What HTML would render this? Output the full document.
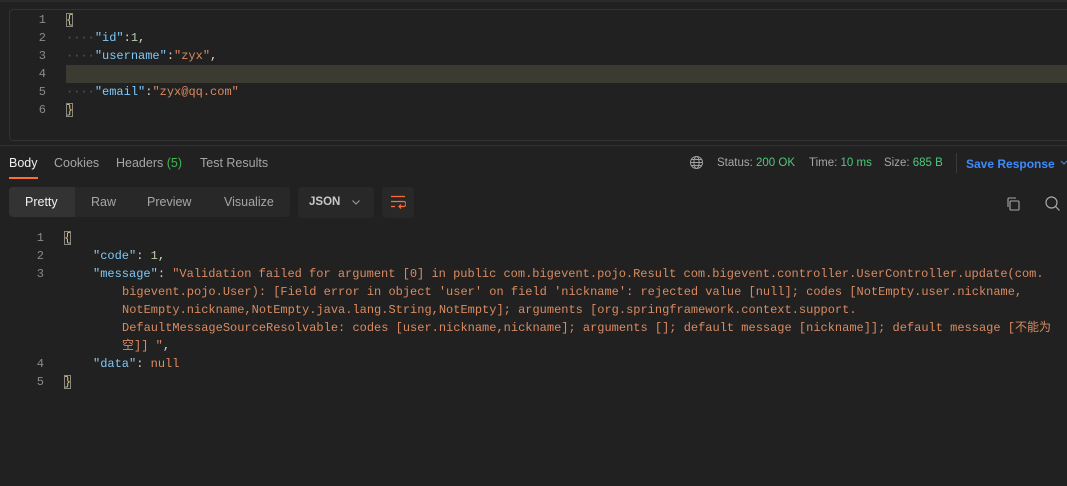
<!DOCTYPE html>
<html><head><style>
*{margin:0;padding:0;box-sizing:border-box}
body{width:1067px;height:404px;background:#212121;overflow:hidden;position:relative;font-family:"Liberation Sans","Noto Sans CJK SC",sans-serif}
.mono{font-family:"Liberation Mono","Noto Sans CJK SC",monospace;font-size:12px;white-space:pre;line-height:18px}
.mono span{line-height:18px}
.ab{position:absolute}
.ln{position:absolute;width:20px;text-align:right;color:#8a8a8a}
.k{color:#7fc8f8}.s{color:#d98b62}.n{color:#b5cea8}.p{color:#d4d4d4}.d{color:#555}
.br{display:inline-block;outline:1px solid #888;outline-offset:-1px;color:#e0c060;line-height:14px!important}
.t{position:absolute;font-size:12.5px;color:#a6a6a6;top:156px}
</style></head><body>
<div class="ab" style="left:0;top:0;width:1067px;height:2px;background:#2a2a2a"></div>
<div class="ab" style="left:9px;top:9px;width:1070px;height:132px;border:1px solid #333;border-right:none;border-radius:4px 0 0 4px"></div>
<div class="ab" style="left:0;top:145px;width:1067px;height:1px;background:#303030"></div>
<div class="ab" style="left:66px;top:65px;width:1001px;height:18px;background:#3b3b31"></div>
<div class="mono">
<span class="ln" style="left:26px;top:11px">1</span>
<span class="ln" style="left:26px;top:29px">2</span>
<span class="ln" style="left:26px;top:47px">3</span>
<span class="ln" style="left:26px;top:65px">4</span>
<span class="ln" style="left:26px;top:83px">5</span>
<span class="ln" style="left:26px;top:101px">6</span>
<span class="ab" style="left:66px;top:11px"><span class="br">{</span></span>
<span class="ab" style="left:66px;top:29px"><span class="d">····</span><span class="k">"id"</span><span class="p">:</span><span class="n">1</span><span class="p">,</span></span>
<span class="ab" style="left:66px;top:47px"><span class="d">····</span><span class="k">"username"</span><span class="p">:</span><span class="s">"zyx"</span><span class="p">,</span></span>
<span class="ab" style="left:66px;top:83px"><span class="d">····</span><span class="k">"email"</span><span class="p">:</span><span class="s">"zyx@qq.com"</span></span>
<span class="ab" style="left:66px;top:101px"><span class="br">}</span></span>
</div>

<span class="t" style="left:9px;color:#f0f0f0">Body</span>
<div class="ab" style="left:9px;top:177px;width:29px;height:2px;background:#ff6c37"></div>
<span class="t" style="left:54px">Cookies</span>
<span class="t" style="left:116px">Headers <span style="color:#3fb950">(5)</span></span>
<span class="t" style="left:200px">Test Results</span>

<svg class="ab" style="left:689px;top:155px" width="15" height="15" viewBox="0 0 15 15" fill="none" stroke="#a0a0a0" stroke-width="1"><circle cx="7.5" cy="7.5" r="6"/><ellipse cx="7.5" cy="7.5" rx="2.6" ry="6"/><path d="M1.5 7.5h12M2.5 4.5h10M2.5 10.5h10"/></svg>
<span class="t" style="left:717px;font-size:11.5px;top:157px">Status: <span style="color:#4ec97a">200 OK</span></span>
<span class="t" style="left:809px;font-size:11.5px;top:157px">Time: <span style="color:#4ec97a">10 ms</span></span>
<span class="t" style="left:884px;font-size:11.5px;top:157px">Size: <span style="color:#4ec97a">685 B</span></span>
<div class="ab" style="left:956px;top:153px;width:1px;height:20px;background:#3a3a3a"></div>
<span class="t" style="left:966px;color:#3d8bfd;font-weight:bold;font-size:12px;top:157px">Save Response</span>
<svg class="ab" style="left:1060px;top:159px" width="8" height="7" viewBox="0 0 8 7"><path d="M1 2l3 3 3-3" stroke="#3d8bfd" fill="none"/></svg>

<div class="ab" style="left:9px;top:187px;width:281px;height:30px;background:#282828;border-radius:4px"></div>
<div class="ab" style="left:9px;top:187px;width:66px;height:30px;background:#333;border-radius:4px 0 0 4px"></div>
<span class="t" style="left:25px;top:195px;color:#f0f0f0">Pretty</span>
<span class="t" style="left:91px;top:195px">Raw</span>
<span class="t" style="left:147px;top:195px">Preview</span>
<span class="t" style="left:224px;top:195px">Visualize</span>
<div class="ab" style="left:298px;top:187px;width:76px;height:31px;background:#282828;border-radius:4px"></div>
<span class="t" style="left:309px;top:196px;font-size:11.5px;font-weight:bold;color:#c8c8c8">JSON</span>
<svg class="ab" style="left:351px;top:199px" width="10" height="7" viewBox="0 0 10 7"><path d="M1.5 1.5l3.5 3.5 3.5-3.5" stroke="#a0a0a0" fill="none"/></svg>
<div class="ab" style="left:382px;top:187px;width:32px;height:31px;background:#282828;border-radius:4px"></div>
<svg class="ab" style="left:390px;top:194px" width="16" height="16" viewBox="0 0 16 16" fill="none" stroke="#ff6c37" stroke-width="1.2"><path d="M1 2.5h14M1 7.5h12.5a2.5 2.5 0 0 1 0 5H9M11 10.5l-2 2 2 2M1 12.5h4"/></svg>
<svg class="ab" style="left:1005px;top:196px" width="16" height="16" viewBox="0 0 16 16" fill="none" stroke="#a8a8a8" stroke-width="1.1"><rect x="5" y="5" width="9" height="9" rx="1"/><path d="M3 11V3a1 1 0 0 1 1-1h7"/></svg>
<svg class="ab" style="left:1044px;top:195px" width="17" height="17" viewBox="0 0 17 17" fill="none" stroke="#a8a8a8" stroke-width="1.2"><circle cx="7.5" cy="7.5" r="5.5"/><path d="M11.5 11.5l4 4"/></svg>

<div class="mono">
<span class="ln" style="left:24px;top:229px">1</span>
<span class="ln" style="left:24px;top:247px">2</span>
<span class="ln" style="left:24px;top:265px">3</span>
<span class="ln" style="left:24px;top:355px">4</span>
<span class="ln" style="left:24px;top:373px">5</span>
<span class="ab" style="left:64px;top:229px"><span class="br">{</span></span>
<span class="ab" style="left:93px;top:247px"><span class="k">"code"</span><span class="p">: </span><span class="n">1</span><span class="p">,</span></span>
<span class="ab" style="left:93px;top:265px"><span class="k">"message"</span><span class="p">: </span><span class="s">"Validation failed for argument [0] in public com.bigevent.pojo.Result com.bigevent.controller.UserController.update(com.</span></span>
<span class="ab s" style="left:122px;top:283px">bigevent.pojo.User): [Field error in object 'user' on field 'nickname': rejected value [null]; codes [NotEmpty.user.nickname,</span>
<span class="ab s" style="left:122px;top:301px">NotEmpty.nickname,NotEmpty.java.lang.String,NotEmpty]; arguments [org.springframework.context.support.</span>
<span class="ab s" style="left:122px;top:319px;height:18px;overflow:hidden">DefaultMessageSourceResolvable: codes [user.nickname,nickname]; arguments []; default message [nickname]]; default message [不能为</span>
<span class="ab" style="left:122px;top:337px;height:18px;overflow:hidden"><span class="s">空]] "</span><span class="p">,</span></span>
<span class="ab" style="left:93px;top:355px"><span class="k">"data"</span><span class="p">: </span><span class="s">null</span></span>
<span class="ab" style="left:64px;top:373px"><span class="br">}</span></span>
</div>
</body></html>
